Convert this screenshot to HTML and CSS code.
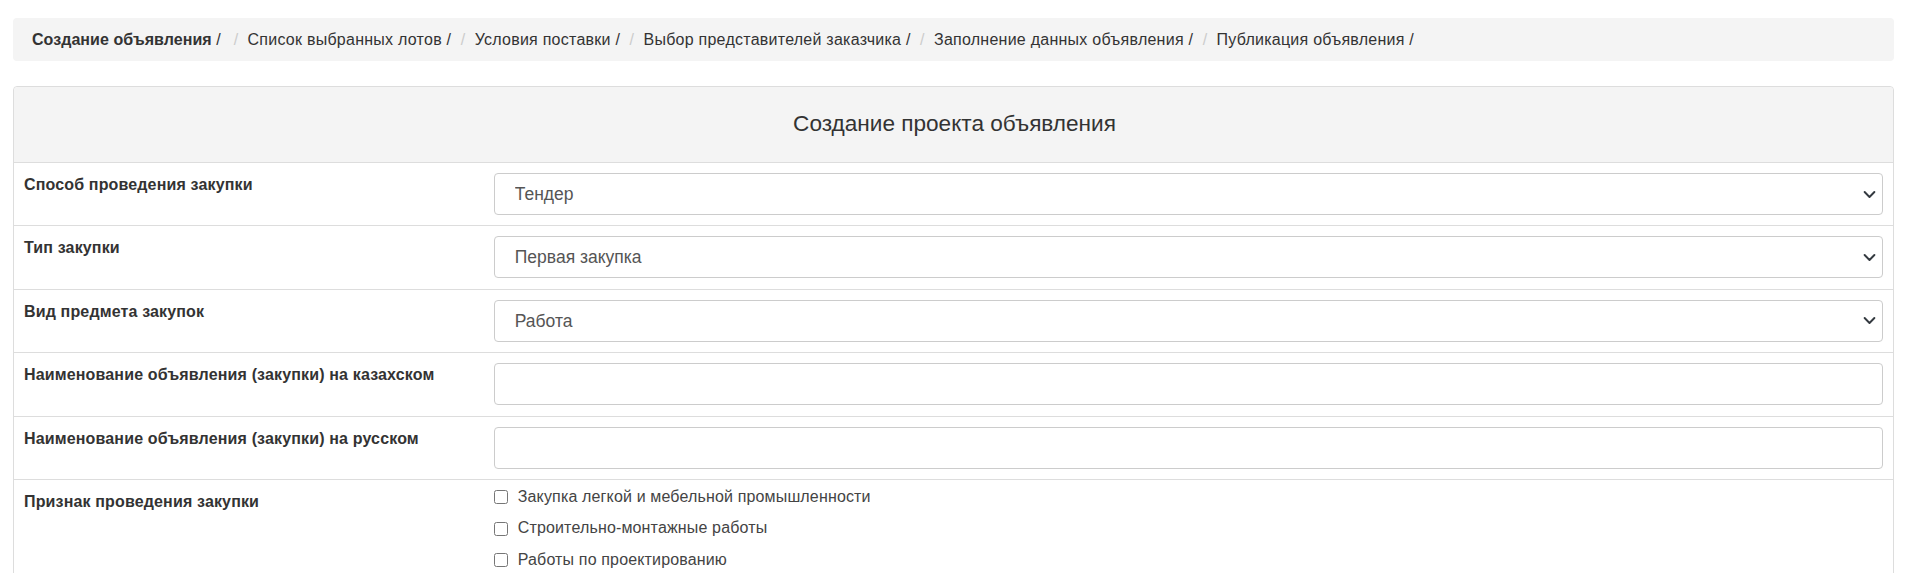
FILE: index.html
```html
<!DOCTYPE html>
<html lang="ru">
<head>
<meta charset="utf-8">
<title>Создание проекта объявления</title>
<link rel="stylesheet" href="styles.css">
</head>
<body>
<div class="page">
  <ol class="breadcrumb">
    <li class="crumb crumb-current">Создание объявления <span class="crumb-slash">/ </span></li>
    <li class="crumb">Список выбранных лотов / </li>
    <li class="crumb">Условия поставки / </li>
    <li class="crumb">Выбор представителей заказчика / </li>
    <li class="crumb">Заполнение данных объявления / </li>
    <li class="crumb">Публикация объявления / </li>
  </ol>

  <div class="card">
    <div class="card-header">Создание проекта объявления</div>

    <div class="form-row">
      <div class="form-label">Способ проведения закупки</div>
      <div class="form-field">
        <select class="form-select">
          <option>Тендер</option>
        </select>
      </div>
    </div>

    <div class="form-row">
      <div class="form-label">Тип закупки</div>
      <div class="form-field">
        <select class="form-select">
          <option>Первая закупка</option>
        </select>
      </div>
    </div>

    <div class="form-row">
      <div class="form-label">Вид предмета закупок</div>
      <div class="form-field">
        <select class="form-select">
          <option>Работа</option>
        </select>
      </div>
    </div>

    <div class="form-row">
      <div class="form-label">Наименование объявления (закупки) на казахском</div>
      <div class="form-field">
        <input class="form-input" type="text">
      </div>
    </div>

    <div class="form-row">
      <div class="form-label">Наименование объявления (закупки) на русском</div>
      <div class="form-field">
        <input class="form-input" type="text">
      </div>
    </div>

    <div class="form-row">
      <div class="form-label">Признак проведения закупки</div>
      <div class="form-field checks">
        <label class="check"><input type="checkbox" class="check-box"><span>Закупка легкой и мебельной промышленности</span></label>
        <label class="check"><input type="checkbox" class="check-box"><span>Строительно-монтажные работы</span></label>
        <label class="check"><input type="checkbox" class="check-box"><span>Работы по проектированию</span></label>
      </div>
    </div>
  </div>
</div>
</body>
</html>
```

FILE: styles.css
```css
* {
  box-sizing: border-box;
}

html, body {
  margin: 0;
  padding: 0;
  background: #ffffff;
}

body {
  font-family: "Liberation Sans", Arial, sans-serif;
  font-size: 16px;
  line-height: 1.42857;
  color: #333333;
}

.page {
  padding: 18px 19px 0 13px;
}

/* Breadcrumb */
.breadcrumb {
  list-style: none;
  margin: 0 0 25px 0;
  padding: 11px 19px 9px;
  background: #f4f4f4;
  border-radius: 4px;
  height: 43px;
  white-space: nowrap;
}

.crumb {
  display: inline-block;
  color: #333333;
  letter-spacing: 0.25px;
}

.crumb + .crumb::before {
  content: "/\00a0";
  padding: 0 5px;
  color: #cccccc;
  letter-spacing: 0;
}

.crumb-current {
  font-weight: bold;
  letter-spacing: 0.05px;
  margin-right: 3.5px;
}

.crumb-slash {
  font-weight: normal;
}

/* Card */
.card {
  border: 1px solid #dddddd;
  border-radius: 4px;
  background: #ffffff;
}

.card-header {
  height: 76px;
  display: flex;
  align-items: center;
  justify-content: center;
  background: #f4f4f4;
  border-bottom: 1px solid #dddddd;
  border-radius: 4px 4px 0 0;
  font-size: 22.6px;
  color: #333333;
  padding-left: 2px;
}

.form-row {
  display: grid;
  grid-template-columns: 25% 75%;
  border-top: 1px solid #dddddd;
}

.card-header + .form-row {
  border-top: none;
}

.form-label {
  padding: 11px 10px 9px 10px;
  font-weight: bold;
  color: #333333;
  letter-spacing: 0.15px;
}

.form-field {
  padding: 10px 10px 10.4px 10px;
}

.form-select,
.form-input {
  display: block;
  width: 100%;
  height: 42px;
  margin: 0;
  border: 1px solid #cccccc;
  border-radius: 4px;
  background-color: #ffffff;
  font-family: "Liberation Sans", Arial, sans-serif;
  font-size: 17.5px;
  color: #555555;
  padding: 0 30px 0 20px;
  outline: none;
}

.form-select {
  -webkit-appearance: none;
  appearance: none;
  background-image: url("data:image/svg+xml,%3Csvg xmlns='http://www.w3.org/2000/svg' viewBox='0 0 16 16'%3E%3Cpath fill='none' stroke='%23343a40' stroke-linecap='round' stroke-linejoin='round' stroke-width='2.4' d='m2 5 6 6 6-6'/%3E%3C/svg%3E");
  background-repeat: no-repeat;
  background-position: right 6px center;
  background-size: 13px 13px;
}

/* Checkboxes */
.checks {
  display: flex;
  flex-direction: column;
  gap: 8.6px;
  padding-top: 5.5px;
}

.check {
  display: flex;
  align-items: center;
  height: 23px;
  color: #444444;
  font-weight: normal;
  letter-spacing: 0.15px;
}

.check-box {
  width: 14px;
  height: 14px;
  margin: 0 10px 0 0;
}
```
